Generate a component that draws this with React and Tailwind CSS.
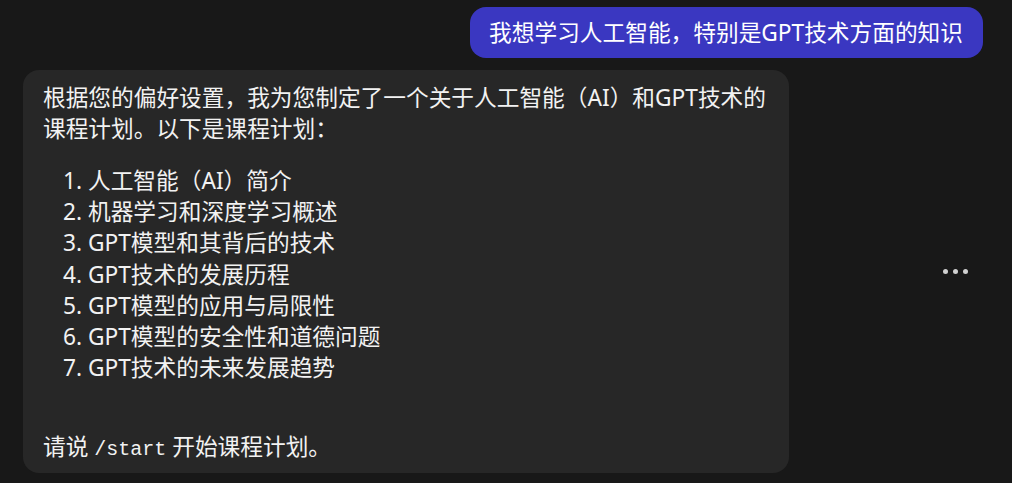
export default function App() {
  const items = [
    "人工智能（AI）简介",
    "机器学习和深度学习概述",
    "GPT模型和其背后的技术",
    "GPT技术的发展历程",
    "GPT模型的应用与局限性",
    "GPT模型的安全性和道德问题",
    "GPT技术的未来发展趋势",
  ];
  return (
    <div
      className="w-[1012px] h-[483px] bg-[#181818] text-[#f2f2f2] overflow-hidden flex flex-col"
      style={{ fontFamily: '"Noto Sans", "Noto Sans CJK SC", sans-serif' }}
    >
      <div className="flex justify-end pt-[7px] pr-[29px]">
        <div className="bg-[#3a37c1] rounded-2xl h-[51px] pl-[19px] pr-[20px] flex items-center text-[22.7px] leading-[31px] text-white">
          我想学习人工智能，特别是GPT技术方面的知识
        </div>
      </div>
      <div className="flex items-center justify-between mt-[12px] pl-[23px] pr-[44px]">
        <div className="w-[766px] bg-[#272727] rounded-2xl pl-[20px] pr-[20px] pt-[13px] pb-[10px] text-[22.7px] leading-[30.5px]">
          <p>根据您的偏好设置，我为您制定了一个关于人工智能（AI）和GPT技术的课程计划。以下是课程计划：</p>
          <ol className="mt-[21px] pl-[20px] leading-[31.2px]">
            {items.map((t, i) => (
              <li key={i}>
                {i + 1}. {t}
              </li>
            ))}
          </ol>
          <p className="mt-[49px] h-[30.5px]">
            请说{" "}
            <code className="text-[20px] leading-none" style={{ fontFamily: '"Liberation Mono", monospace' }}>
              /start
            </code>{" "}
            开始课程计划。
          </p>
        </div>
        <div className="flex gap-[5px] items-center">
          <span className="w-[5px] h-[5px] rounded-full bg-[#d0d0d0]" />
          <span className="w-[5px] h-[5px] rounded-full bg-[#d0d0d0]" />
          <span className="w-[5px] h-[5px] rounded-full bg-[#d0d0d0]" />
        </div>
      </div>
    </div>
  );
}
